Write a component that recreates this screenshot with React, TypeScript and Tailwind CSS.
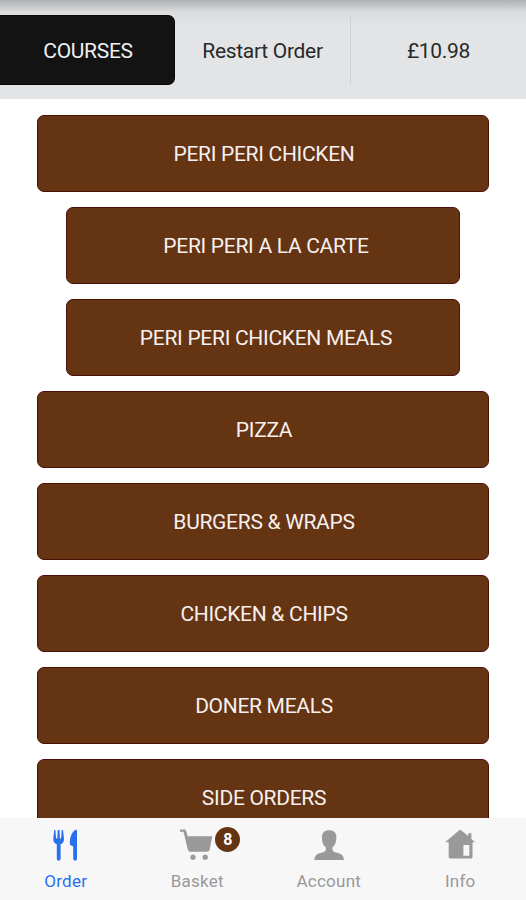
import React from "react";

interface Course {
  name: string;
  nested?: boolean;
}

const COURSES: Course[] = [
  { name: "PERI PERI CHICKEN" },
  { name: "PERI PERI A LA CARTE", nested: true },
  { name: "PERI PERI CHICKEN MEALS", nested: true },
  { name: "PIZZA" },
  { name: "BURGERS & WRAPS" },
  { name: "CHICKEN & CHIPS" },
  { name: "DONER MEALS" },
  { name: "SIDE ORDERS" },
];

const OrderIcon = () => (
  <svg width="34" height="34" viewBox="0 0 34 34" fill="currentColor">
    <path d="M5.2 1.9h1.2l.7 8.6h1.2l.4-8.6h1.8l.4 8.6h1.2l.7-8.6H14l1 9c.2 2.6-1.3 4.3-3.4 5.3v14.4c0 2.8-3.8 2.8-3.8 0V16.2c-2.3-1-3.7-2.7-3.5-5.3z" />
    <path d="M26.9 1.8c.8 0 1.1.6 1.1 1.6v27.2c0 2.7-3.8 2.7-3.8 0V18.5l-3.2-1.8c-.8-5.8 1.5-13.3 5.9-14.9z" />
  </svg>
);

const BasketIcon = () => (
  <svg width="34" height="34" viewBox="0 0 34 34" fill="currentColor">
    <path d="M0 1.5h4.4c.9 0 1.4.4 1.7 1.2l1.6 5.6h24.5l-2.4 12.8c-.3 1.7-1.2 2.7-2.8 2.7H11c-1.9 0-2.8-.9-3.3-2.6L3.5 3.8H0z" />
    <circle cx="13" cy="29.2" r="2.6" />
    <circle cx="25.2" cy="29.2" r="2.6" />
  </svg>
);

const AccountIcon = () => (
  <svg width="34" height="34" viewBox="0 0 34 34" fill="currentColor">
    <path d="M17.2 2.3c-4.5 0-7.3 2.6-7.3 6.9 0 4.7 1.1 8.2 4 10.3v2.4c-.6 1.8-2.8 2.2-5.5 3.1-4.3 1.4-5.6 2.5-6 7.1h29.5c-.4-4.6-1.7-5.7-6-7.1-2.7-.9-4.9-1.3-5.5-3.1v-2.4c2.8-2.1 4-5.6 4-10.3 0-4.3-2.7-6.9-7.2-6.9z" />
  </svg>
);

const InfoIcon = () => (
  <svg width="34" height="34" viewBox="0 0 34 34" fill="currentColor">
    <path
      fillRule="evenodd"
      d="M17.1 1.6 25.2 8V5.3h3.2V11l3.7 3.3h-2.6v14.4c0 1.2-.6 1.8-1.8 1.8H7.5c-1.2 0-1.8-.6-1.8-1.8V14.3H2.1zM20.4 17v10.8h5.9V17z"
    />
  </svg>
);

const TABS = [
  { label: "Order", Icon: OrderIcon, active: true },
  { label: "Basket", Icon: BasketIcon, badge: 8 },
  { label: "Account", Icon: AccountIcon },
  { label: "Info", Icon: InfoIcon },
];

const Header = () => (
  <header className="h-[99px] shrink-0 bg-linear-to-b from-[#b0b1b3] via-[#dcdddf] via-[12px] to-[#e3e4e6] to-[28px] pt-[15px]">
    <div className="flex h-[70px] text-[21px] tracking-[-0.3px] text-[#292929]">
      <button className="w-[175px] rounded-r-[7px] border border-l-0 border-[#090909] bg-[#131313] pt-[4px] pl-[2px] text-[#efefef]">
        COURSES
      </button>
      <button className="w-[176px] border-r border-[#d0d1d3] pt-[4px]">Restart Order</button>
      <div className="flex flex-1 items-center justify-center pt-[4px]">£10.98</div>
    </div>
  </header>
);

const CourseList = () => (
  <main className="flex min-h-0 flex-1 flex-col items-center gap-[15px] overflow-hidden pt-[15.5px]">
    {COURSES.map((course) => (
      <button
        key={course.name}
        className={`h-[77px] shrink-0 rounded-[7px] border border-[#4d1109] bg-[#643413] pt-[4px] text-[21px] tracking-[-0.3px] text-[#f7f0ef] ${
          course.nested ? "w-[394px] pl-[6px]" : "w-[452px] pl-[2px]"
        }`}
      >
        {course.name}
      </button>
    ))}
  </main>
);

const TabBar = () => (
  <nav className="grid h-[82px] shrink-0 grid-cols-4 bg-[#f7f7f7]">
    {TABS.map(({ label, Icon, active, badge }) => (
      <button
        key={label}
        className={`flex flex-col items-center pt-[10px] ${active ? "text-[#2870ee]" : "text-[#999]"}`}
      >
        <span className="relative">
          <Icon />
          {badge && (
            <span className="absolute -top-[1px] left-[35px] flex size-[25px] items-center justify-center rounded-full bg-[#643413] text-[16px] font-bold text-white">
              {badge}
            </span>
          )}
        </span>
        <span className="mt-[6px] text-[17px] leading-[26px] tracking-[0.25px]">{label}</span>
      </button>
    ))}
  </nav>
);

export default function App() {
  return (
    <div className="flex h-[900px] w-[526px] flex-col overflow-hidden bg-white font-[Roboto,sans-serif]">
      <Header />
      <CourseList />
      <TabBar />
    </div>
  );
}
